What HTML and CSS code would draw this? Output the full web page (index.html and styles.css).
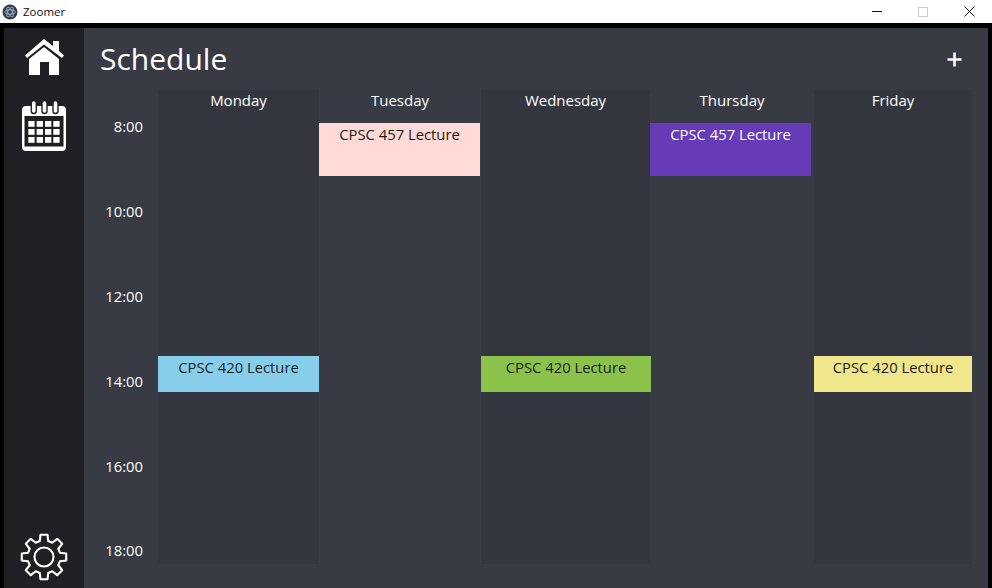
FILE: index.html
```html
<!DOCTYPE html>
<html lang="en">

<head>
  <meta charset="UTF-8">
  <meta name="viewport" content="width=device-width, initial-scale=1.0">
  <title>Zoomer</title>
  <link rel="stylesheet" href="styles.css">
</head>

<body>
  <!-- Window title bar -->
  <div class="title-bar">
    <svg class="app-icon" viewBox="0 0 16 16">
      <circle cx="8" cy="8" r="7.5" fill="#2f3a47" />
      <g fill="none" stroke="#a9c4d6" stroke-width="0.8">
        <ellipse cx="8" cy="8" rx="5.5" ry="2.2" />
        <ellipse cx="8" cy="8" rx="5.5" ry="2.2" transform="rotate(60 8 8)" />
        <ellipse cx="8" cy="8" rx="5.5" ry="2.2" transform="rotate(120 8 8)" />
      </g>
    </svg>
    <div class="title-bar-name">Zoomer</div>
    <div class="window-buttons">
      <div class="window-button"><div class="win-min"></div></div>
      <div class="window-button"><div class="win-max"></div></div>
      <div class="window-button">
        <svg class="win-close" viewBox="0 0 11 11">
          <path d="M0.5 0.5 L10.5 10.5 M10.5 0.5 L0.5 10.5" stroke="#111" fill="none" />
        </svg>
      </div>
    </div>
  </div>

  <div class="app">
    <!-- Sidebar -->
    <div class="sidebar">
      <div class="sidebar-top">
        <svg class="icon-home" viewBox="0 0 39 36">
          <polygon fill="#fff" points="19,0 28,7 28,2 34,2 34,12 39,16.5 37,19 19,5.5 2,19 0,16.5" />
          <polygon fill="#fff" points="19,8 34,20 34,36 24,36 24,23 15,23 15,36 4,36 4,20" />
        </svg>
        <svg class="icon-calendar" viewBox="0 0 45 50">
          <rect x="0" y="5" width="44" height="45" rx="4" fill="#fff" />
          <rect x="2.5" y="15" width="39" height="30.5" fill="#1f2023" />
          <g fill="#fff" stroke="#1f2023" stroke-width="1.4">
            <rect x="9.3" y="-0.5" width="5" height="13" rx="2.5" />
            <rect x="20" y="-0.5" width="5" height="13" rx="2.5" />
            <rect x="31" y="-0.5" width="5" height="13" rx="2.5" />
          </g>
          <g fill="#fff">
            <rect x="6.3" y="20" width="6.3" height="5.8" />
            <rect x="14.7" y="20" width="6.3" height="5.8" />
            <rect x="23" y="20" width="6.3" height="5.8" />
            <rect x="31.3" y="20" width="6.3" height="5.8" />
            <rect x="6.3" y="28" width="6.3" height="5.8" />
            <rect x="14.7" y="28" width="6.3" height="5.8" />
            <rect x="23" y="28" width="6.3" height="5.8" />
            <rect x="31.3" y="28" width="6.3" height="5.8" />
            <rect x="6.3" y="36" width="6.3" height="5.8" />
            <rect x="14.7" y="36" width="6.3" height="5.8" />
            <rect x="23" y="36" width="6.3" height="5.8" />
            <rect x="31.3" y="36" width="6.3" height="5.8" />
          </g>
        </svg>
      </div>
      <svg class="icon-gear" viewBox="-24 -24 48 48">
        <polygon fill="none" stroke="#fff" stroke-width="2.1" stroke-linejoin="round" points="-4.27,-15.94 -3.52,-22.22 3.52,-22.22 4.27,-15.94 8.25,-14.29 13.22,-18.2 18.2,-13.22 14.29,-8.25 15.94,-4.27 22.22,-3.52 22.22,3.52 15.94,4.27 14.29,8.25 18.2,13.22 13.22,18.2 8.25,14.29 4.27,15.94 3.52,22.22 -3.52,22.22 -4.27,15.94 -8.25,14.29 -13.22,18.2 -18.2,13.22 -14.29,8.25 -15.94,4.27 -22.22,3.52 -22.22,-3.52 -15.94,-4.27 -14.29,-8.25 -18.2,-13.22 -13.22,-18.2 -8.25,-14.29" />
        <circle r="9.5" fill="none" stroke="#fff" stroke-width="2.1" />
      </svg>
    </div>

    <!-- Main schedule -->
    <div class="main">
      <div class="main-header">
        <div class="main-title">Schedule</div>
        <svg class="add-button" viewBox="0 0 15 15">
          <path d="M7.5 0.5 V14.5 M0.5 7.5 H14.5" stroke="#fff" stroke-width="2.6" fill="none" />
        </svg>
      </div>

      <div class="schedule">
        <div class="times">
          <div class="time">8:00</div>
          <div class="time">10:00</div>
          <div class="time">12:00</div>
          <div class="time">14:00</div>
          <div class="time">16:00</div>
          <div class="time">18:00</div>
        </div>

        <div class="days">
          <div class="day day-dark">
            <div class="day-name">Monday</div>
            <div class="event slot-afternoon blue">CPSC 420 Lecture</div>
          </div>
          <div class="day">
            <div class="day-name">Tuesday</div>
            <div class="event slot-morning pink">CPSC 457 Lecture</div>
          </div>
          <div class="day day-dark">
            <div class="day-name">Wednesday</div>
            <div class="event slot-afternoon green">CPSC 420 Lecture</div>
          </div>
          <div class="day">
            <div class="day-name">Thursday</div>
            <div class="event slot-morning purple">CPSC 457 Lecture</div>
          </div>
          <div class="day day-dark">
            <div class="day-name">Friday</div>
            <div class="event slot-afternoon yellow">CPSC 420 Lecture</div>
          </div>
        </div>
      </div>
    </div>
  </div>
</body>

</html>
```

FILE: styles.css
```css
* {
  margin: 0;
  padding: 0;
  box-sizing: border-box;
  font-family: "Open Sans", sans-serif;
}

body {
  width: 992px;
  height: 588px;
  overflow: hidden;
  background-color: #000;
}

/* Title bar */
.title-bar {
  height: 23px;
  background-color: white;
  display: flex;
  align-items: center;
  padding-left: 2px;
}

.app-icon {
  width: 16px;
  height: 16px;
}

.title-bar-name {
  margin-left: 5px;
  font-size: 11.5px;
  color: #111;
}

.window-buttons {
  margin-left: auto;
  display: flex;
}

.window-button {
  width: 46px;
  height: 23px;
  display: flex;
  align-items: center;
  justify-content: center;
}

.win-min {
  width: 10px;
  height: 1px;
  background-color: #111;
}

.win-max {
  width: 10px;
  height: 10px;
  border: 1px solid #ccc;
}

.win-close {
  width: 11px;
  height: 11px;
}

/* App layout */
.app {
  display: flex;
  height: 560px;
  margin: 5px 4px 0;
}

.sidebar {
  width: 80px;
  background-color: #1f2023;
  display: flex;
  flex-direction: column;
  justify-content: space-between;
  align-items: center;
  padding: 11px 0 7px;
}

.sidebar-top {
  display: flex;
  flex-direction: column;
  align-items: center;
  gap: 26px;
}

.icon-home {
  width: 39px;
  height: 36px;
}

.icon-calendar {
  width: 45px;
  height: 50px;
}

.icon-gear {
  width: 48px;
  height: 48px;
}

.main {
  flex: 1;
  background-color: #383b44;
  padding: 0 16px;
}

.main-header {
  height: 61px;
  margin-bottom: 1px;
  display: flex;
  justify-content: space-between;
  align-items: center;
}

.main-title {
  font-size: 30px;
  color: white;
}

.add-button {
  width: 15px;
  height: 15px;
  margin-right: 10px;
  margin-top: 2px;
}

/* Schedule */
.schedule {
  display: flex;
  height: 474px;
}

.times {
  width: 58px;
  padding: 26.4px 15px 0 0;
  display: flex;
  flex-direction: column;
  gap: 64.8px;
  text-align: right;
}

.time {
  font-size: 14.8px;
  line-height: 20px;
  font-weight: 500;
  color: white;
}

.days {
  display: grid;
  grid-template-columns: 161px 162px 169px 164px 158px;
}

.day-dark {
  background-color: #33363e;
}

.day-name {
  height: 33px;
  font-size: 15px;
  font-weight: 500;
  line-height: 20px;
  text-align: center;
  color: white;
}

.event {
  padding-top: 1px;
  font-size: 14.8px;
  line-height: 20px;
  text-align: center;
  color: #1a1c20;
}

.slot-morning {
  height: 53px;
}

.slot-afternoon {
  height: 36px;
  margin-top: 233px;
}

.blue {
  background-color: #87ceeb;
}

.pink {
  background-color: #ffdad7;
  margin-right: 1px;
}

.green {
  background-color: #8bc34a;
  margin-right: -1px;
}

.purple {
  background-color: #673ab7;
  color: white;
  margin-right: 3px;
}

.yellow {
  background-color: #f0e68c;
}
```
